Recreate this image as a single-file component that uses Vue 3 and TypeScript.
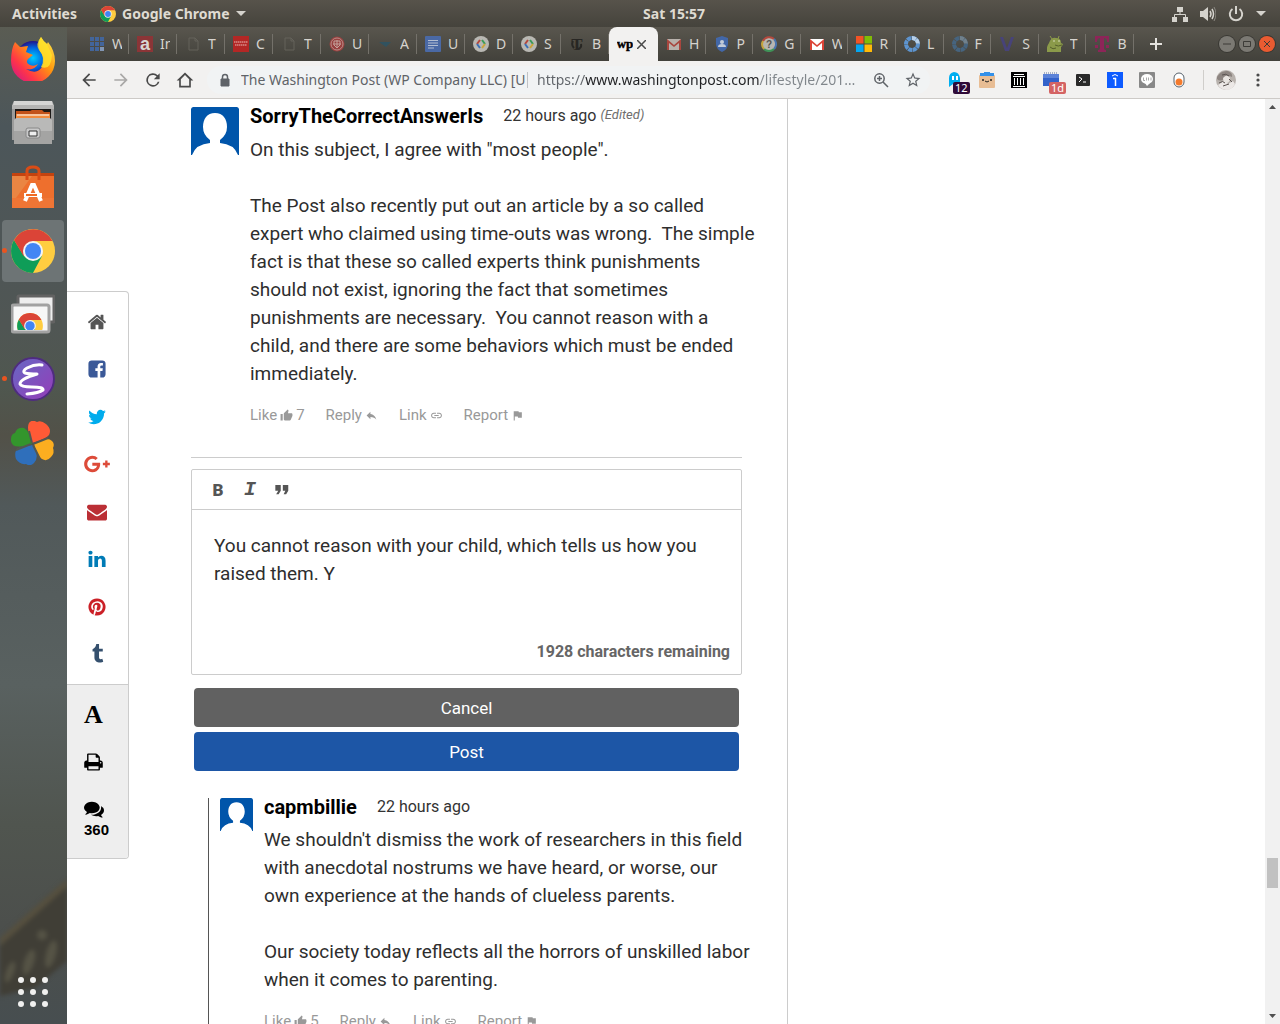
<script setup lang="ts">
import { ref, computed } from 'vue'

interface Icon { label: string; box: string; art: string; color?: string }
interface Tab { title: string; art: string; active?: boolean }

const page = '<path d="M4 2h6l3 3v9H4z M10 2v3h3" fill="none" stroke="#64625a"/>'
const gmail = (bg: string, red: string) =>
  `<path d="M1 3h14v11H1z" fill="${bg}"/><path d="M1 14V3l7 6 7-6v11h-2V7l-5 4-5-4v7z" fill="${red}"/>`
const dev = '<circle cx="8" cy="8" r="8" fill="#b9b8b3"/><path d="M7 4 4 8" stroke="#b5473c" stroke-width="2"/><path d="M4 8l3 4" stroke="#3c6fb5" stroke-width="2"/><path d="M9 4l3 4" stroke="#3b9a5a" stroke-width="2"/><path d="M12 8l-3 4" stroke="#c9a43c" stroke-width="2"/>'
const ring = (a: string, b: string) =>
  `<circle cx="8" cy="8" r="6" fill="none" stroke="${a}" stroke-width="4" stroke-dasharray="4 .5"/><path d="M8 2a6 6 0 0 1 6 6" fill="none" stroke="${b}" stroke-width="4" stroke-dasharray="4 .5"/>`

const tabs: Tab[] = [
  { title: 'W', art: '<g fill="#43659b"><path d="M1 1h4v4H1zM6 1h4v4H6zM11 1h4v4h-4zM1 6h4v4H1zM6 6h4v4H6zM11 6h4v4h-4zM1 11h4v4H1zM6 11h4v4H6z"/><path d="M11 11h4v4h-4z" fill="#8296b4"/></g>' },
  { title: 'In', art: '<rect width="16" height="16" fill="#8b3537"/><text x="8" y="14" font-size="18" font-weight="700" text-anchor="middle" fill="#dad5d2" font-family="Liberation Sans">a</text>' },
  { title: 'T', art: page },
  { title: 'C', art: '<rect width="16" height="16" fill="#b32725"/><path d="M1 6h14M2 9h12" stroke="#d78a86" stroke-width="1.5" stroke-dasharray="1.5 .5"/>' },
  { title: 'T', art: page },
  { title: 'U', art: '<circle cx="8" cy="8" r="7.5" fill="#98403f"/><circle cx="8" cy="8" r="6" fill="none" stroke="#b98d87"/><path d="M5 5h6v4l-3 3-3-3zM8 4v8M4 8h8" stroke="#c4a09a" fill="none"/>' },
  { title: 'A', art: '<path d="M2 6h12l-5 5z" fill="#31525f"/>' },
  { title: 'U', art: '<rect width="16" height="16" rx="1" fill="#4a69a5"/><path d="M3 4.500h10M3 7h10M3 9.500h10M3 12h6" stroke="#b3bed2"/>' },
  { title: 'D', art: dev },
  { title: 'S', art: dev },
  { title: 'B', art: '<text x="8" y="14" font-size="17" font-weight="700" text-anchor="middle" fill="#282724" font-family="Liberation Serif">T</text><path d="M4 5q-2 4 1 7M12 8q1 4-3 5" fill="none" stroke="#282724" stroke-width="2"/>' },
  { title: '', active: true, art: '<text x="8" y="12" font-size="13" font-weight="700" text-anchor="middle" fill="#000" stroke="#000" stroke-width=".4" font-family="Liberation Serif">wp</text>' },
  { title: 'H', art: gmail('#b8b1ac', '#a8463e') },
  { title: 'P', art: '<path d="M8 0l6 2v6q0 5-6 8-6-3-6-8V2z" fill="#4267a8"/><circle cx="8" cy="6" r="2" fill="#c3cbd8"/><path d="M4 11q0-3 4-3t4 3z" fill="#c3cbd8"/>' },
  { title: 'G', art: '<circle cx="8" cy="8" r="7" fill="#b7b5b0"/><g fill="none" stroke-width="2"><path d="M2 5a7 7 0 0 1 11-2" stroke="#b5493e"/><path d="M13 3a7 7 0 0 1 0 10" stroke="#4a74ae"/><path d="M13 13a7 7 0 0 1-10 0" stroke="#3f9358"/><path d="M3 13a7 7 0 0 1-1-8" stroke="#c5a33c"/></g><text x="8" y="12" font-size="10" font-weight="700" text-anchor="middle" fill="#55534f" font-family="Liberation Sans">?</text>' },
  { title: 'W', art: gmail('#ffffff', '#db4437') },
  { title: 'R', art: '<path d="M0 0h8v8H0z" fill="#f35325"/><path d="M8 0h8v8H8z" fill="#81bc06"/><path d="M0 8h8v8H0z" fill="#05a6f0"/><path d="M8 8h8v8H8z" fill="#ffba08"/><path d="M8 0v16M0 8h16" stroke="#4e4c45"/>' },
  { title: 'L', art: ring('#5d94cf', '#b7cfe8') },
  { title: 'F', art: ring('#46647f', '#71818c') },
  { title: 'S', art: '<path d="M1 1h3l4 11 4-11h3L10 15H6z" fill="#474379"/>' },
  { title: 'T', art: '<path d="M0 16q-1-5 2-9 2-6 7-5 5 0 5 5l2 1-1 2-1 1v5z" fill="#8b9a4a"/><path d="M5 3 3 0M11 3l1-3" stroke="#8b9a4a"/><circle cx="7" cy="5" r=".8" fill="#dfe3c8"/><circle cx="12" cy="5" r=".8" fill="#dfe3c8"/><path d="M8 9q3 2 7 0M3 11q3 3 6 1" stroke="#56602c" fill="none"/>' },
  { title: 'B', art: '<path d="M1 0h14v6h-2q0-4-3-4v10q0 2 2 2v2H4v-2q2 0 2-2V2Q3 2 3 6H1z" fill="#8d2558"/><path d="M1 9h3v3H1zM12 9h3v3h-3z" fill="#8d2558"/>' },
]

const nav: Icon[] = [
  { label: 'Back', box: '0 0 24 24', color: '#4a4a4a', art: '<path d="M20 11H7.800l5.600-5.600L12 4l-8 8 8 8 1.400-1.400L7.800 13H20z"/>' },
  { label: 'Forward', box: '0 0 24 24', color: '#a9a8a7', art: '<path d="M4 13h12.200l-5.600 5.600L12 20l8-8-8-8-1.400 1.400 5.600 5.600H4z"/>' },
  { label: 'Reload', box: '0 0 24 24', color: '#4a4a4a', art: '<path d="M17.650 6.350A8 8 0 1 0 19.730 14h-2.080A6 6 0 1 1 12 6c1.660 0 3.140.690 4.220 1.780L13 11h7V4z"/>' },
  { label: 'Home', box: '0 0 24 24', color: '#4a4a4a', art: '<path d="M2 12.500 12 3l10 9.500h-3V21H5v-8.500zM7 11v8h10v-8l-5-5z"/>' },
]

const extensions: (Icon & { badge?: string; tone?: string })[] = [
  { label: 'Ghostery', box: '0 0 16 16', badge: '12', tone: '#2f0a38', art: '<path d="M2 15V6q0-5 5-6 5 0 6 6v9l-3-3-2 3-2-3z" fill="#00aef0"/><path d="M5 4h2v4H5zM9 4h2v4H9z" fill="#fff"/>' },
  { label: 'Boxy', box: '0 0 16 16', art: '<rect y="3" width="16" height="13" rx="1" fill="#e8bd94"/><path d="M1 1h4V0h6v1h4v3H1z" fill="#3490e8"/><circle cx="4" cy="8" r="1" fill="#222"/><circle cx="12" cy="8" r="1" fill="#222"/><path d="M6 9q2 2 4 0" stroke="#222" fill="none"/>' },
  { label: 'Archive', box: '0 0 16 16', art: '<path d="M0 0h16v16H0z" fill="#000"/><path d="M3 2h10v1H3zM2 4h12v1H2zM3 6h1v7H3zM6 6h1v7H6zM9 6h1v7H9zM12 6h1v7h-1zM2 14h12v1H2z" fill="#fff"/>' },
  { label: 'Calendar', box: '0 0 16 16', badge: '1d', tone: '#d46363', art: '<path d="M0 2h16v12H0z" fill="#3362ca"/><path d="M0 2h16v4H0z" fill="#5b82d8"/><path d="M1 1h14" stroke="#5a6f9a" stroke-width="1" stroke-dasharray="1 1"/>' },
  { label: 'Terminal', box: '0 0 16 16', art: '<rect x="1" y="2" width="14" height="12" rx="1" fill="#2a2a2a"/><path d="M4 5l3 2-3 3M8 10h3" stroke="#fff" fill="none"/>' },
  { label: 'Info', box: '0 0 16 16', art: '<path d="M0 0h16v16H0z" fill="#0d5bff"/><path d="M8.500 6v8M6 6.500h3" fill="none" stroke="#fff" stroke-width="1.500"/><path d="M5 4q3-3 6 0" fill="none" stroke="#fff"/>' },
  { label: 'Line', box: '0 0 16 16', art: '<rect width="16" height="16" rx="1" fill="#888"/><ellipse cx="8" cy="7" rx="6" ry="5" fill="#fff"/><path d="M6 11l2 3 3-3z" fill="#fff"/><path d="M4.500 5.500v3H6M7.500 5.500v3M9.500 8.500v-3M12 5.500v3" stroke="#888" stroke-width=".7" fill="none"/>' },
  { label: 'Toggle', box: '0 0 16 16', art: '<rect x="3" y="1" width="10" height="14" rx="5" fill="#fff" stroke="#55606a"/><circle cx="8" cy="10" r="3.500" fill="#f47a2c"/>' },
]

const share: (Icon & { width: number })[] = [
  { label: 'Home', width: 20, box: '0 0 1792 1792', color: '#555', art: '<path d="M1472 992v480q0 26-19 45t-45 19h-384v-384h-256v384h-384q-26 0-45-19t-19-45v-480q0-1 .5-3t.5-3l575-474 575 474q1 2 1 6zm223-69l-62 74q-8 9-21 11h-3q-13 0-21-7l-692-577-692 577q-12 8-24 7-13-2-21-11l-62-74q-8-10-7-23.5t11-21.5l719-599q32-26 76-26t76 26l244 204v-195q0-14 9-23t23-9h192q14 0 23 9t9 23v408l219 182q10 8 11 21.5t-7 23.5z"/>' },
  { label: 'Facebook', width: 20, box: '0 0 1792 1792', color: '#3b5998', art: '<path d="M1376 128q119 0 203.5 84.5t84.5 203.5v960q0 119-84.5 203.5t-203.5 84.5h-188v-595h199l30-232h-229v-148q0-56 23.5-84t91.5-28l122-1v-207q-63-9-178-9-136 0-217.5 80t-81.5 226v171h-200v232h200v595h-532q-119 0-203.5-84.5t-84.5-203.5v-960q0-119 84.5-203.5t203.5-84.5h960z"/>' },
  { label: 'Twitter', width: 20, box: '0 0 1792 1792', color: '#00aced', art: '<path d="M1684 408q-67 98-162 167 1 14 1 42 0 130-38 259.5t-115.5 248.5-184.5 210.5-258 146-323 54.5q-271 0-496-145 35 4 78 4 225 0 401-138-105-2-188-64.5t-114-159.5q33 5 61 5 43 0 85-11-112-23-185.5-111.5t-73.5-205.5v-4q68 38 146 41-66-44-105-115t-39-154q0-88 44-163 121 149 294.5 238.5t371.5 99.5q-8-38-8-74 0-134 94.5-228.5t228.5-94.5q140 0 236 102 109-21 205-78-37 115-142 178 93-10 186-50z"/>' },
  { label: 'Google Plus', width: 26, box: '-256 0 2304 1792', color: '#dd4b39', art: '<path d="M1181 913q0 208-87 370.5t-248 254-369 91.5q-149 0-285-58t-234-156-156-234-58-285 58-285 156-234 234-156 285-58q286 0 491 192l-199 191q-117-113-292-113-123 0-227.500 62t-165.500 168.500-61 232.500 61 232.500 165.500 168.500 227.500 62q83 0 152.500-23t114.500-57.500 78.500-78.500 49-83 21.500-74h-416v-252h692q12 63 12 122zm867-122v210h-209v209h-210v-209h-209v-210h209v-209h210v209h209z"/>' },
  { label: 'Email', width: 20, box: '0 0 1792 1792', color: '#bb2f35', art: '<path d="M1792 710v794q0 66-47 113t-113 47h-1472q-66 0-113-47t-47-113v-794q44 49 101 87 362 246 497 345 57 42 92.5 65.5t94.5 48 110 24.500h2q51 0 110-24.500t94.500-48 92.500-65.500q170-123 498-345 57-39 100-87zm0-294q0 79-49 151t-122 123q-376 261-468 325-10 7-42.500 31t-54 38.500-52 32.500-57.500 27-50 9h-2q-23 0-50-9t-57.500-27-52-32.500-54-38.500-42.500-31q-91-64-262-182.500t-205-142.500q-62-42-117-115.500t-55-136.500q0-78 41.500-130t118.500-52h1472q65 0 112.500 47t47.500 113z"/>' },
  { label: 'LinkedIn', width: 20, box: '0 0 1792 1792', color: '#007bb6', art: '<path d="M477 625v991h-330v-991h330zm21-306q1 73-50.500 122t-135.500 49h-2q-82 0-132-49t-50-122q0-74 51.500-122.500t134.500-48.500 133 48.500 51 122.500zm1166 729v568h-329v-530q0-105-40.500-164.500t-126.500-59.500q-63 0-105.500 34.500t-63.500 85.500q-11 30-11 81v553h-329q2-399 2-647t-1-296l-1-48h329v144h-2q20-32 41-56t56.500-52 87-43.500 114.500-15.500q171 0 275 113.500t104 332.500z"/>' },
  { label: 'Pinterest', width: 20, box: '0 0 1792 1792', color: '#cb2027', art: '<path d="M1664 896q0 209-103 385.500t-279.500 279.500-385.500 103q-111 0-218-32 59-93 78-164 9-34 54-211 20 39 73 67.500t114 28.500q121 0 216-68.500t147-188.500 52-270q0-114-59.500-214t-172.500-163-255-63q-105 0-196 29t-154.500 77-109 110.500-67 129.500-21.500 134q0 104 40 183t117 111q30 12 38-20 2-7 8-31t8-30q6-23-11-43-51-61-51-151 0-151 104.500-259.500t273.500-108.500q151 0 235.500 82t84.500 213q0 170-68.500 289t-175.500 119q-61 0-98-43.500t-23-104.500q8-35 26.500-93.500t30-103 11.500-75.500q0-50-27-83t-77-33q-62 0-105 57t-43 142q0 73 25 122l-99 418q-17 70-13 177-206-91-333-281t-127-423q0-209 103-385.500t279.500-279.500 385.500-103 385.500 103 279.500 279.500 103 385.500z"/>' },
  { label: 'Tumblr', width: 21, box: '0 0 1792 1792', color: '#35506e', art: '<path d="M1328 1329l80 237q-23 35-111 66t-177 32q-104 2-190.500-26t-142.500-74-95-106-55.500-120-16.500-118v-544h-168v-215q72-26 129-69.500t91-90 58-102 34-99 15-88.500q1-5 4.500-8.500t7.500-3.500h244v424h333v252h-334v518q0 30 6.500 56t22.500 52.500 49.500 41.500 81.500 14q78-2 134-29z"/>' },
]

const thumb = 'M1 21h4V9H1v12zm22-11c0-1.100-.900-2-2-2h-6.310l.950-4.570.030-.320c0-.410-.170-.790-.440-1.060L14.170 1 7.590 7.590C7.220 7.950 7 8.450 7 9v10c0 1.100.900 2 2 2h9c.830 0 1.540-.500 1.840-1.220l3.020-7.050c.090-.230.140-.470.140-.730z'
const replyArrow = 'M10 9V5l-7 7 7 7v-4.100c5 0 8.500 1.600 11 5.100-1-5-4-10-11-11z'
const chain = 'M3.900 12c0-1.710 1.390-3.100 3.100-3.100h4V7H7c-2.760 0-5 2.240-5 5s2.240 5 5 5h4v-1.900H7c-1.710 0-3.100-1.390-3.100-3.100zM8 13h8v-2H8v2zm9-6h-4v1.900h4c1.710 0 3.100 1.390 3.100 3.100s-1.390 3.100-3.100 3.100h-4V17h4c2.760 0 5-2.240 5-5s-2.240-5-5-5z'
const flag = 'M14.400 6L14 4H5v17h2v-7h5.600l.400 2h7V6z'

const comment = {
  author: 'SorryTheCorrectAnswerIs',
  time: '22 hours ago',
  likes: 7,
  lines: [
    'On this subject, I agree with "most people".',
    '',
    'The Post also recently put out an article by a so called',
    'expert who claimed using time-outs was wrong.  The simple',
    'fact is that these so called experts think punishments',
    'should not exist, ignoring the fact that sometimes',
    'punishments are necessary.  You cannot reason with a',
    'child, and there are some behaviors which must be ended',
    'immediately.',
  ],
}
const answer = {
  author: 'capmbillie',
  time: '22 hours ago',
  likes: 5,
  lines: [
    "We shouldn't dismiss the work of researchers in this field",
    'with anecdotal nostrums we have heard, or worse, our',
    'own experience at the hands of clueless parents.',
    '',
    'Our society today reflects all the horrors of unskilled labor',
    'when it comes to parenting.',
  ],
}

const start = 'You cannot reason with your child, which tells us how you\nraised them. Y'
const draft = ref(start)
const remaining = computed(() => 1928 + start.length - draft.value.length)
const address = ref('https://www.washingtonpost.com/lifestyle/201…')
</script>

<template>
  <div class="desktop">
    <svg class="defs" width="0" height="0" aria-hidden="true">
      <symbol id="chrome" viewBox="0 0 44 44">
        <circle cx="22" cy="22" r="22" fill="#ffcd40" />
        <path d="M3 11A22 22 0 0 0 22 44L31 27 22 30 13 27z" fill="#0f9d58" />
        <path d="M22 12h19.500A22 22 0 0 0 3 11l9.500 16z" fill="#db4437" />
        <circle cx="22" cy="22" r="10" fill="#f4f4f4" />
        <circle cx="22" cy="22" r="8" fill="#4285f4" />
      </symbol>
    </svg>

    <header class="topbar">
      <button class="menu">Activities</button>
      <button class="menu app">
        <svg width="16" height="16"><use href="#chrome" /></svg>
        Google Chrome
        <svg width="10" height="5" viewBox="0 0 10 5"><path d="M0 0h10L5 5z" fill="#d5d3cd" /></svg>
      </button>
      <time class="clock">Sat 15:57</time>
      <div class="status">
        <svg width="16" height="16" viewBox="0 0 16 16" fill="#d5d3cd"><path d="M5 1h6v5H5zM0 11h5v5H0zM11 11h5v5h-5z" /><path d="M8 6v3M2.500 11V8.500h11V11" fill="none" stroke="#d5d3cd" /></svg>
        <svg width="16" height="16" viewBox="0 0 16 16" fill="#d5d3cd"><path d="M0 5h3l5-4v14l-5-4H0z" /><path d="M10 5q2 3 0 6M12 3q3 5 0 10" fill="none" stroke="#d5d3cd" stroke-width="1.500" /><path d="M14 1q4 7 0 14" fill="none" stroke="#8b8982" /></svg>
        <svg width="16" height="16" viewBox="0 0 16 16" fill="none" stroke="#d5d3cd" stroke-width="2"><path d="M4.500 3a6.200 6.200 0 1 0 7 0M8 0v8" /></svg>
        <svg width="10" height="5" viewBox="0 0 10 5"><path d="M0 0h10L5 5z" fill="#d5d3cd" /></svg>
      </div>
    </header>

    <div class="workspace">
      <nav class="dock" aria-label="Applications">
        <button class="launcher" aria-label="Firefox">
          <svg viewBox="0 0 44 44">
            <defs>
              <linearGradient id="fox" x1="1" y1="0" x2="0" y2="1"><stop offset="0" stop-color="#fff44f" /><stop offset=".4" stop-color="#ff980e" /><stop offset=".7" stop-color="#ff3647" /><stop offset="1" stop-color="#c60e97" /></linearGradient>
              <radialGradient id="globe"><stop offset="0" stop-color="#00ccff" /><stop offset=".6" stop-color="#0066e0" /><stop offset="1" stop-color="#20148a" /></radialGradient>
            </defs>
            <circle cx="22" cy="21" r="17" fill="url(#globe)" />
            <path d="M4 5 9 10l8-1-2 6 7 3-5 4q-3 4 2 6 4 2 8-1-4 7-12 5 12 7 17-4 2-8-3-14Q26 6 30 0q2 4 6 7l1-2q7 9 7 19A22 22 0 0 1 0 24Q0 12 4 5z" fill="url(#fox)" />
            <path d="M30 0q-6 7-2 13 7 8 2 17 10 4 11-12L36 7q-4-3-6-7z" fill="#ffe52b" opacity=".8" />
          </svg>
        </button>
        <button class="launcher" aria-label="Files">
          <svg viewBox="0 0 44 44">
            <path d="M1 4 3 0h38l2 4v35H1z" fill="#9c9c9b" /><path d="M2 4h40l-1-4H3z" fill="#d5d5d4" /><path d="M1 4h42v4H1z" fill="#b4b4b3" /><path d="M4 8h36v10H4z" fill="#1c1917" />
            <path d="M5 10h14l2-1h10l2 2h6v7H5z" fill="#c2521a" /><path d="M5 13h34v5H5z" fill="#f08b3e" /><path d="M6 14h32" stroke="#fff" />
            <path d="M5 17h34l2 2v24H3V19z" fill="#b9b9b8" /><path d="M3 30h38v13H3z" fill="#a4a4a3" />
            <rect x="15" y="27" width="14" height="10" rx="2" fill="#c9c9c9" stroke="#888" /><path d="M18 30h8v5h-8z" fill="#eee" stroke="#333" />
          </svg>
        </button>
        <button class="launcher" aria-label="Software">
          <svg viewBox="0 0 44 44">
            <path d="M1 8h42v35H1z" fill="#ef7535" /><path d="M1 8h42v3H1z" fill="#c4430f" /><path d="M1 11h42v22H1z" fill="#ee6f2d" /><path d="M1 11h20L5 33H1z" fill="#e88f4d" opacity=".7" />
            <path d="M16 15V6q0-4 6-4t6 4v9" fill="none" stroke="#d94c16" stroke-width="3" />
            <path d="M14 36l7-16h2l7 16M13 30h18" fill="none" stroke="#fff" stroke-width="4" /><path d="M15 30h11" stroke="#f06a23" stroke-width="2" />
          </svg>
        </button>
        <button class="launcher running current" aria-label="Google Chrome"><svg><use href="#chrome" /></svg></button>
        <button class="launcher" aria-label="Chrome windows">
          <svg viewBox="0 0 44 44">
            <rect x="7" y="3" width="36" height="26" rx="1" fill="#eee" stroke="#636363" stroke-width="3" />
            <rect x="1" y="12" width="37" height="27" rx="2" fill="#f7f7f7" stroke="#a2a2a2" stroke-width="3" />
            <svg x="6" y="20" width="26" height="17" viewBox="0 0 44 29"><use href="#chrome" width="44" height="44" /></svg>
          </svg>
        </button>
        <button class="launcher running" aria-label="Emacs">
          <svg viewBox="0 0 44 44">
            <defs><linearGradient id="gnu" x1="0" y1="0" x2="1" y2="1"><stop offset="0" stop-color="#6668c4" /><stop offset="1" stop-color="#963cb8" /></linearGradient></defs>
            <circle cx="22" cy="22" r="21" fill="url(#gnu)" stroke="#4f2c80" stroke-width="2" />
            <path d="M31 8Q24 7 16 11 11 14 14 16q4 1 12 1Q9 22 9 27q1 3 12 3 12 0 11 3-4 3-16 4" fill="none" stroke="#fff" stroke-width="3" stroke-linecap="round" stroke-linejoin="round" />
          </svg>
        </button>
        <button class="launcher" aria-label="Clover">
          <svg viewBox="0 0 44 44">
            <path d="M21 22Q15 7 18 2q3-4 8-1 4-2 9 2 6 5 3 11-3 4-17 8z" fill="#ff5a36" />
            <path d="M21 23Q-1 30 0 18q0-5 4-6 2-6 9-5 6 3 8 16z" fill="#33952c" />
            <path d="M22 24q7 12 1 18-4 4-8 1-6 1-10-5-2-6 1-10 4-3 16-4z" fill="#2f6fbb" />
            <path d="M23 23q13-8 18-3 3 3 1 7 2 5-2 9-4 5-9 2-5-2-8-15z" fill="#fcae20" />
            <path d="M21 22 18 10M22 23l15-6M22 24l7 14M20 23 5 29" stroke="#535750" stroke-width="2" />
          </svg>
        </button>
        <svg class="wing" viewBox="0 0 67 146" preserveAspectRatio="none" aria-hidden="true">
          <path d="M0 60 67 1v82L35 110 0 118z" fill="#403e36" /><path d="M0 60 67 1v8L0 68z" fill="#56503f" />
          <g fill="#555345"><ellipse cx="10" cy="94" rx="4" ry="11" transform="rotate(20 10 94)" /><ellipse cx="29" cy="84" rx="5" ry="13" transform="rotate(18 29 84)" /><ellipse cx="51" cy="76" rx="5" ry="14" transform="rotate(15 51 76)" /><circle cx="42" cy="57" r="5" /></g>
        </svg>
        <button class="grid" aria-label="Show applications"><i v-for="n in 9" :key="n"></i></button>
      </nav>

      <section class="browser">
        <div class="tabstrip">
          <div class="tabs" role="tablist">
            <button v-for="(tab, i) in tabs" :key="i" class="tab" :class="{ active: tab.active }" role="tab" :aria-selected="!!tab.active">
              <svg width="16" height="16" viewBox="0 0 16 16" v-html="tab.art"></svg>
              <svg v-if="tab.active" width="9" height="9" viewBox="0 0 9 9"><path d="M0 0l9 9M9 0L0 9" stroke="#4a4a4a" stroke-width="1.500" /></svg>
              <span v-else class="tab-title">{{ tab.title }}</span>
            </button>
          </div>
          <button class="add" aria-label="New tab"><svg width="12" height="12" viewBox="0 0 12 12"><path d="M6 0v12M0 6h12" stroke="#e4e2de" stroke-width="2" /></svg></button>
          <div class="window-buttons">
            <button aria-label="Minimize"><svg viewBox="0 0 16 16"><path d="M4 8h8" /></svg></button>
            <button aria-label="Maximize"><svg viewBox="0 0 16 16"><path d="M4.500 5.500h7v5h-7z" /></svg></button>
            <button class="close" aria-label="Close"><svg viewBox="0 0 16 16"><path d="M5 5l6 6M11 5l-6 6" /></svg></button>
          </div>
        </div>

        <div class="toolbar">
          <button v-for="item in nav" :key="item.label" class="tool" :aria-label="item.label">
            <svg width="20" height="20" :viewBox="item.box" :fill="item.color" v-html="item.art"></svg>
          </button>
          <div class="omnibox">
            <svg width="12" height="14" viewBox="0 0 12 14"><path d="M2 6h8v7H2z" fill="#5f6368" stroke="#5f6368" stroke-linejoin="round" /><path d="M3.500 6V4a2.500 2.500 0 0 1 5 0v2" fill="none" stroke="#5f6368" stroke-width="1.500" /></svg>
            <span class="company">The Washington Post (WP Company LLC) [US]</span>
            <i class="divider"></i>
            <input v-model="address" class="address" type="text" aria-label="Address" spellcheck="false">
            <button class="tool" aria-label="Zoom"><svg width="16" height="16" viewBox="0 0 16 16" fill="none" stroke="#5f6368" stroke-width="1.500"><circle cx="6.500" cy="6.500" r="4.700" /><path d="M10 10l5 5M4 6.500h5M6.500 4v5" /></svg></button>
            <button class="tool" aria-label="Bookmark"><svg width="18" height="18" viewBox="0 0 24 24" fill="#5f6368"><path d="M22 9.240l-7.190-.620L12 2 9.190 8.630 2 9.240l5.460 4.730L5.820 21 12 17.270 18.180 21l-1.630-7.030zM12 15.400l-3.760 2.270 1-4.280-3.320-2.880 4.380-.380L12 6.100l1.710 4.040 4.380.380-3.320 2.880 1 4.280z" /></svg></button>
          </div>
          <button v-for="item in extensions" :key="item.label" class="tool" :aria-label="item.label">
            <svg width="16" height="16" :viewBox="item.box" v-html="item.art"></svg>
            <span v-if="item.badge" class="badge" :style="{ background: item.tone }">{{ item.badge }}</span>
          </button>
          <button class="profile" aria-label="Profile">
            <svg width="20" height="20" viewBox="0 0 20 20"><circle cx="10" cy="10" r="10" fill="#b8b2ad" /><path d="M1 7Q5 0 12 1q5 2 4 6-5-3-8 2-4 3-7 0z" fill="#8d8581" /><path d="M7 8q4-5 7 0 0 4-3 5-4 0-4-5z" fill="#e9e5e1" /><path d="M2 15l6-4 4 3 5-3 2 3q-3 6-9 6-6-1-8-5z" fill="#ece8e6" /><path d="M6 5q4-2 7 1M3 13q4-3 6 0M13 9l3 3M7 16l6-2" fill="none" stroke="#5b5451" /></svg>
          </button>
          <button class="tool" aria-label="Menu"><svg width="4" height="14" viewBox="0 0 4 14" fill="#4a4a4a"><circle cx="2" cy="2" r="1.600" /><circle cx="2" cy="7" r="1.600" /><circle cx="2" cy="12" r="1.600" /></svg></button>
        </div>

        <div class="viewport">
          <div class="page">
            <aside class="rail">
              <ul class="share">
                <li v-for="item in share" :key="item.label">
                  <a href="#" :aria-label="item.label"><svg :width="item.width" height="20" :viewBox="item.box" :fill="item.color" v-html="item.art"></svg></a>
                </li>
              </ul>
              <div class="utilities">
                <button class="text-size" aria-label="Text size">A</button>
                <button aria-label="Print"><svg width="19" height="20" viewBox="64 0 1664 1792"><path d="M448 1536h896v-256h-896v256zm0-640h896v-384h-160q-40 0-68-28t-28-68v-160h-640v640zm1152 64q0-26-19-45t-45-19-45 19-19 45 19 45 45 19 45-19 19-45zm128 0v416q0 13-9.500 22.500t-22.500 9.500h-224v160q0 40-28 68t-68 28h-960q-40 0-68-28t-28-68v-160h-224q-13 0-22.500-9.500t-9.500-22.500v-416q0-79 56.500-135.500t135.500-56.500h64v-544q0-40 28-68t68-28h672q40 0 88 20t76 48l152 152q28 28 48 76t20 88v256h64q79 0 135.500 56.500t56.500 135.500z" /></svg></button>
                <a class="count" href="#">
                  <svg width="20" height="20" viewBox="0 0 1792 1792"><path d="M1408 768q0 139-94 257t-256.500 186.500-353.500 68.500q-86 0-176-16-124 88-278 128-36 9-86 16h-3q-11 0-20.500-8t-11.500-21q-1-3-1-6.500t.5-6.500 2-6l2.500-5 3.500-5.500 4-5 4.500-5 4-4.500q5-6 23-25t26-29.500 22.500-29 25-38.500 20.500-44q-124-72-195-177t-71-224q0-139 94-257t256.500-186.500 353.500-68.500 353.500 68.500 256.500 186.500 94 257zm384 256q0 120-71 224.500t-195 176.500q10 24 20.500 44t25 38.500 22.500 29 26 29.500 23 25q1 1 4 4.500t4.500 5 4 5 3.500 5.500l2.500 5 2 6 .5 6.500-1 6.500q-3 14-13 22t-22 7q-50-7-86-16-154-40-278-128-90 16-176 16-271 0-472-132 58 4 88 4 161 0 309-45t264-129q125-92 192-212t67-254q0-77-23-152 129 71 204 178t75 230z" /></svg>
                  360
                </a>
              </div>
            </aside>

            <main class="comments">
              <article class="comment">
                <svg class="avatar" viewBox="0 0 48 48"><rect width="48" height="50" rx="2" fill="#0055aa" /><path d="M24 6c8 0 12 6 12 14q0 8-7 13v3q14 1 18 12H1q4-11 18-12v-3q-7-5-7-13c0-8 4-14 12-14z" fill="#fff" /></svg>
                <div class="body">
                  <header><h3>{{ comment.author }}</h3><time>{{ comment.time }}</time><em>(Edited)</em></header>
                  <p>{{ comment.lines.join('\n') }}</p>
                  <footer>
                    <button>Like <svg class="like" viewBox="0 0 24 24"><path :d="thumb" /></svg>{{ comment.likes }}</button>
                    <button>Reply <svg viewBox="0 0 24 24"><path :d="replyArrow" /></svg></button>
                    <a href="#">Link <svg viewBox="0 0 24 24"><path :d="chain" /></svg></a>
                    <button>Report <svg viewBox="0 0 24 24"><path :d="flag" /></svg></button>
                  </footer>
                </div>
              </article>

              <form class="composer" @submit.prevent>
                <div class="editor">
                  <div class="format">
                    <button type="button" class="bold">B</button>
                    <button type="button" class="italic">I</button>
                    <button type="button" aria-label="Quote"><svg width="20" height="20" viewBox="0 0 24 24" fill="#555"><path d="M5 17h3l2.500-4V6H4v7h3.500zm9 0h3l2.500-4V6h-6.500v7H16z" /></svg></button>
                  </div>
                  <textarea v-model="draft" aria-label="Your reply" spellcheck="false"></textarea>
                  <output>{{ remaining }} characters remaining</output>
                </div>
                <button type="button" class="cancel">Cancel</button>
                <button type="submit" class="post">Post</button>
              </form>

              <article class="comment nested">
                <svg class="avatar" viewBox="0 0 48 48"><rect width="48" height="50" rx="2" fill="#0055aa" /><path d="M24 6c8 0 12 6 12 14q0 8-7 13v3q14 1 18 12H1q4-11 18-12v-3q-7-5-7-13c0-8 4-14 12-14z" fill="#fff" /></svg>
                <div class="body">
                  <header><h3>{{ answer.author }}</h3><time>{{ answer.time }}</time></header>
                  <p>{{ answer.lines.join('\n') }}</p>
                  <footer>
                    <button>Like <svg class="like" viewBox="0 0 24 24"><path :d="thumb" /></svg>{{ answer.likes }}</button>
                    <button>Reply <svg viewBox="0 0 24 24"><path :d="replyArrow" /></svg></button>
                    <a href="#">Link <svg viewBox="0 0 24 24"><path :d="chain" /></svg></a>
                    <button>Report <svg viewBox="0 0 24 24"><path :d="flag" /></svg></button>
                  </footer>
                </div>
              </article>
            </main>
          </div>
          <div class="scrollbar" aria-hidden="true">
            <svg width="7" height="4" viewBox="0 0 7 4"><path d="M0 4h7L3.500 0z" fill="#505050" /></svg>
            <div class="track"><i></i></div>
            <svg width="7" height="4" viewBox="0 0 7 4"><path d="M0 0h7L3.500 4z" fill="#505050" /></svg>
          </div>
        </div>
      </section>
    </div>
  </div>
</template>

<style>
body { background: #fff; overflow: hidden; }
</style>

<style scoped>
* { box-sizing: border-box; }
button { padding: 0; border: 0; background: none; font: inherit; color: inherit; cursor: pointer; }
svg { display: block; flex: none; }
.defs { position: absolute; }
.desktop { height: 100vh; display: flex; flex-direction: column; font-family: "Noto Sans", sans-serif; }

.topbar { flex: none; height: 27px; padding: 0 14px 0 12px; display: grid; grid-template-columns: auto 1fr auto 1fr; align-items: center; gap: 23px; background: linear-gradient(#57534b, #45433c); color: #dfdbd2; font: 700 14px/20px "Noto Sans", sans-serif; }
.menu { display: flex; align-items: center; gap: 6px; }
.clock { font-size: 14px; margin-right: 18px; }
.status { display: flex; align-items: center; justify-content: flex-end; gap: 12px; }

.workspace { flex: 1; min-height: 0; display: flex; }
.dock { flex: none; width: 67px; display: flex; flex-direction: column; padding: 1px 2px 0; position: relative; overflow: hidden; background: linear-gradient(#5a5c53, #4c565a 10%, #505654 30%, #4f574f 36%, #525148 41%, #51595a 48%, #596160 66%, #50554f 80%, #4c4f4c 90%, #474e50); }
.launcher { flex: none; width: 62px; height: 62px; margin-bottom: 2px; display: grid; place-items: center; position: relative; z-index: 1; border-radius: 4px; }
.launcher > svg { width: 44px; height: 44px; }
.current { background: #6d7475; }
.running::before { content: ""; position: absolute; left: 0; top: 28px; width: 5px; height: 5px; border-radius: 50%; background: #e95420; }
.wing { position: absolute; left: 0; bottom: 0; width: 67px; height: 146px; filter: blur(2px); }
.grid { margin: auto auto 17px 16px; display: grid; grid-template-columns: repeat(3, 6px); gap: 6px; position: relative; }
.grid i { width: 6px; height: 6px; border-radius: 50%; background: #f0f0ef; }

.browser { flex: 1; min-width: 0; display: flex; flex-direction: column; }
.tabstrip { flex: none; height: 34px; display: flex; align-items: center; padding: 0 5px 0 14px; background: linear-gradient(#59564e, #42413b); }
.tabs { flex: 0 1 1053px; min-width: 0; align-self: stretch; display: grid; grid-template-columns: repeat(11, minmax(0, 48px)) minmax(0, 49px) repeat(10, minmax(0, 1fr)); }
.tab { min-width: 0; display: flex; align-items: center; gap: 7px; padding-left: 8px; position: relative; }
.tab::after { content: ""; position: absolute; right: 0; top: 7px; height: 20px; border-right: 1px solid #74716a; }
.tab-title { width: 10px; overflow: hidden; white-space: nowrap; color: #d6d3ce; font-size: 14px; line-height: 20px; text-align: left; }
.tab.active { background: #f2f1f0; border-radius: 8px 8px 0 0; gap: 4px; }
.tab.active::after { display: none; }
.add { margin-left: 16px; }
.window-buttons { margin-left: auto; display: flex; gap: 4px; }
.window-buttons button { width: 16px; height: 16px; border-radius: 50%; background: #7b7973; box-shadow: 0 0 0 1px #3a3934; }
.window-buttons svg { fill: none; stroke: #3c3b37; }
.window-buttons .close { background: #ea5b31; }

.toolbar { flex: none; height: 38px; display: flex; align-items: center; padding: 0 6px; background: #f2f1f0; border-bottom: 1px solid #cdcac7; }
.tool { flex: none; width: 32px; height: 32px; display: grid; place-items: center; position: relative; }
.omnibox { flex: 1; min-width: 0; height: 28px; margin: 0 9px 0 6px; padding: 0 1px 0 12px; display: flex; align-items: center; border-radius: 14px; background: #f1f3f4; font-size: 14px; line-height: 20px; }
.company { width: 284px; flex: none; margin-left: 10px; overflow: hidden; white-space: nowrap; color: #5f6368; }
.divider { flex: none; width: 1px; height: 16px; margin-left: 2px; background: #c0c2c5; }
.address { flex: 1; min-width: 0; border: 0; outline: 0; padding: 0 0 0 9px; font: inherit; color: transparent; caret-color: #202124; background: linear-gradient(90deg, #5f6368 57px, #202124 57px, #202124 231px, #80868b 231px); background-clip: text; -webkit-background-clip: text; }
.badge { position: absolute; left: 14px; top: 18px; min-width: 16px; height: 12px; padding: 0 2px; border-radius: 2px; color: #fff; font-size: 11px; line-height: 12px; }
.profile { flex: none; margin: 0 6px 0 8px; padding-left: 12px; border-left: 1px solid #d0cecb; }

.viewport { flex: 1; min-height: 0; display: flex; background: #fff; }
.page { flex: 1; min-width: 0; display: flex; align-items: flex-start; overflow: hidden; font-family: Roboto, "Liberation Sans", sans-serif; }
.rail { flex: none; width: 62px; margin: 192px 62px 0 0; border: 1px solid #ccc; border-left: 0; border-radius: 0 4px 4px 0; overflow: hidden; }
.share { list-style: none; margin: 0; padding: 6px 1px 6px 0; height: 392px; display: grid; grid-auto-rows: 1fr; justify-items: center; align-items: center; }
.utilities { padding: 16px 0 17px 17px; display: flex; flex-direction: column; align-items: flex-start; gap: 19px; border-top: 1px solid #ccc; background: #eee; color: #000; }
.utilities button { height: 28px; display: grid; place-items: center; }
.utilities .text-size { font: 700 26px/28px "Liberation Serif", serif; }
.count { display: block; padding-top: 4px; color: #000; text-decoration: none; font: 700 15px/22px "Liberation Sans", sans-serif; }

.comments { flex: 0 1 597px; min-width: 0; padding: 8px 45px 0 0; border-right: 1px solid #ccc; align-self: stretch; }
.comment { display: flex; gap: 11px; }
.avatar { width: 48px; height: 48px; border-radius: 2px 2px 0 0; }
.body { flex: 1; min-width: 0; }
.body header { display: flex; align-items: center; height: 18px; color: #333; white-space: nowrap; }
h3 { margin: 0 20px 0 0; color: #000; font-size: 20px; font-weight: 700; line-height: 18px; }
time { font-size: 16px; line-height: 18px; }
em { margin: -4px 0 0 4px; color: #6e6e6e; font-size: 13px; }
.body p { margin: 11px 0 18px; color: #2e2e2e; font-size: 19px; line-height: 28px; white-space: pre; }
.body footer { display: flex; gap: 21px; color: #999; font-size: 15px; line-height: 18px; }
.body footer button, .body footer a { display: flex; align-items: center; gap: 3px; color: inherit; text-decoration: none; }
.body footer svg { width: 13px; height: 13px; fill: #999; }

.composer { margin-top: 33px; padding-top: 11px; border-top: 1px solid #ccc; display: flex; flex-direction: column; }
.editor { display: flex; flex-direction: column; border: 1px solid #ccc; border-radius: 2px; margin-bottom: 13px; }
.format { height: 40px; padding-left: 10px; display: flex; align-items: center; border-bottom: 1px solid #ccc; color: #555; }
.format button { width: 32px; height: 32px; display: grid; place-items: center; line-height: 20px; }
.format .bold { font: 900 17px/20px Roboto, sans-serif; }
.format .italic { font: italic 700 20px/20px "Liberation Mono", monospace; }
textarea { height: 132px; padding: 22px 10px 0 22px; border: 0; outline: 0; resize: none; background: none; color: #2e2e2e; font: 19px/28px Roboto, "Liberation Sans", sans-serif; }
output { padding: 0 11px 12px; text-align: right; color: #666; font-size: 16px; font-weight: 700; line-height: 20px; }
.cancel, .post { height: 39px; margin: 0 3px 5px; border-radius: 4px; color: #fff; font-size: 17px; background: #616161; }
.post { background: #1d56a6; }
.nested { margin: 22px 0 0 17px; padding-left: 11px; border-left: 1px solid #555; }
.nested .avatar { width: 33px; height: 33px; }
.nested p { margin-top: 10px; }

.scrollbar { flex: none; width: 15px; padding: 6px 0; display: flex; flex-direction: column; align-items: center; background: #f1f1f1; }
.track { flex: 1; width: 11px; display: flex; flex-direction: column; justify-content: flex-end; }
.track i { height: 30px; margin-bottom: 126px; background: #c1c1c1; }
</style>
